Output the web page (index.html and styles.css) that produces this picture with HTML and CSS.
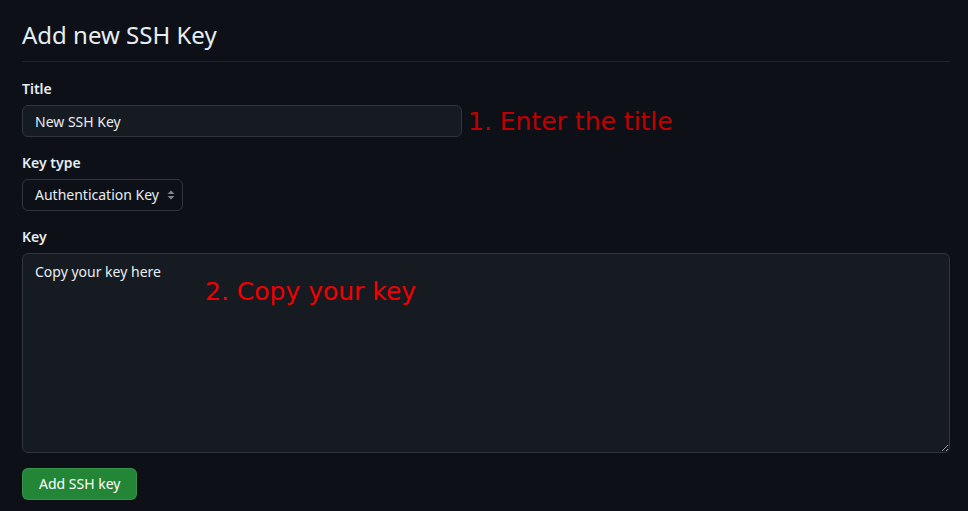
FILE: index.html
```html
<!DOCTYPE html>
<html lang="en">
<head>
<meta charset="utf-8">
<title>Add new SSH Key</title>
<link rel="stylesheet" href="styles.css">
</head>
<body>
<main class="page">
  <div class="subhead">
    <h2 class="subhead-heading">Add new SSH Key</h2>
  </div>
  <form class="form">
    <div class="form-group">
      <label class="label" for="title">Title</label>
      <div class="field-row">
        <input class="input input-title" id="title" type="text" value="New SSH Key">
        <span class="note note-1">1. Enter the title</span>
      </div>
    </div>
    <div class="form-group">
      <label class="label">Key type</label>
      <div class="select">
        <span class="select-text">Authentication Key</span>
        <svg class="select-arrows" width="8" height="10" viewBox="0 0 8 10" aria-hidden="true">
          <path d="M4 0.5 L7.5 4 L0.5 4 Z" fill="#7d8590"/>
          <path d="M4 9.5 L7.5 6 L0.5 6 Z" fill="#7d8590"/>
        </svg>
      </div>
    </div>
    <div class="form-group">
      <label class="label" for="key">Key</label>
      <div class="textarea-wrap">
        <textarea class="input textarea" id="key">Copy your key here</textarea>
        <span class="note note-2">2. Copy your key</span>
      </div>
    </div>
    <div class="form-actions">
      <button type="button" class="btn-primary">Add SSH key</button>
    </div>
  </form>
</main>
</body>
</html>
```
FILE: styles.css
```css
* { box-sizing: border-box; }
html, body {
  margin: 0;
  background: #0d1117;
}
body {
  font-family: "Noto Sans", "Open Sans", sans-serif;
  font-size: 14px;
  line-height: 1.5;
  color: #e6edf3;
}
.page {
  width: 928px;
  margin-left: 22px;
  padding-top: 17px;
}
.subhead {
  padding-bottom: 8px;
  margin-bottom: 16px;
  border-bottom: 1px solid #21262d;
}
.subhead-heading {
  margin: 0;
  font-size: 24px;
  font-weight: 400;
  line-height: 36px;
  color: #e6edf3;
}
.form-group {
  margin-bottom: 15px;
}
.label {
  display: block;
  font-weight: 600;
  font-size: 14px;
  line-height: 21px;
  margin-bottom: 6px;
  color: #e6edf3;
}
.field-row {
  display: flex;
  align-items: center;
  gap: 6px;
}
.input {
  font-family: inherit;
  font-size: 14px;
  line-height: 20px;
  color: #e6edf3;
  background: #161b22;
  border: 1px solid #30363d;
  border-radius: 6px;
  padding: 5px 12px;
  outline: none;
}
.input-title {
  width: 440px;
  height: 32px;
}
.note {
  font-family: "DejaVu Sans", sans-serif;
  font-size: 25px;
  line-height: 30px;
  white-space: nowrap;
}
.note-1 {
  color: #c00000;
  position: relative;
  top: 1px;
}
.select {
  display: inline-flex;
  align-items: center;
  gap: 8px;
  height: 32px;
  padding: 0 7px 0 12px;
  border: 1px solid #30363d;
  border-radius: 6px;
  background: #0d1117;
  color: #e6edf3;
  font-size: 14px;
  line-height: 20px;
}
.select-arrows {
  display: block;
}
.textarea-wrap {
  position: relative;
}
.textarea {
  display: block;
  width: 928px;
  height: 200px;
  padding-top: 8px;
  resize: vertical;
}
.note-2 {
  position: absolute;
  left: 183px;
  top: 24px;
  color: #f00000;
}
.btn-primary {
  font-family: inherit;
  font-size: 14px;
  line-height: 20px;
  font-weight: 400;
  color: #ffffff;
  background: #238636;
  border: 1px solid rgba(240, 246, 252, 0.1);
  border-radius: 6px;
  padding: 5px 16px;
  height: 32px;
  cursor: pointer;
}
```
